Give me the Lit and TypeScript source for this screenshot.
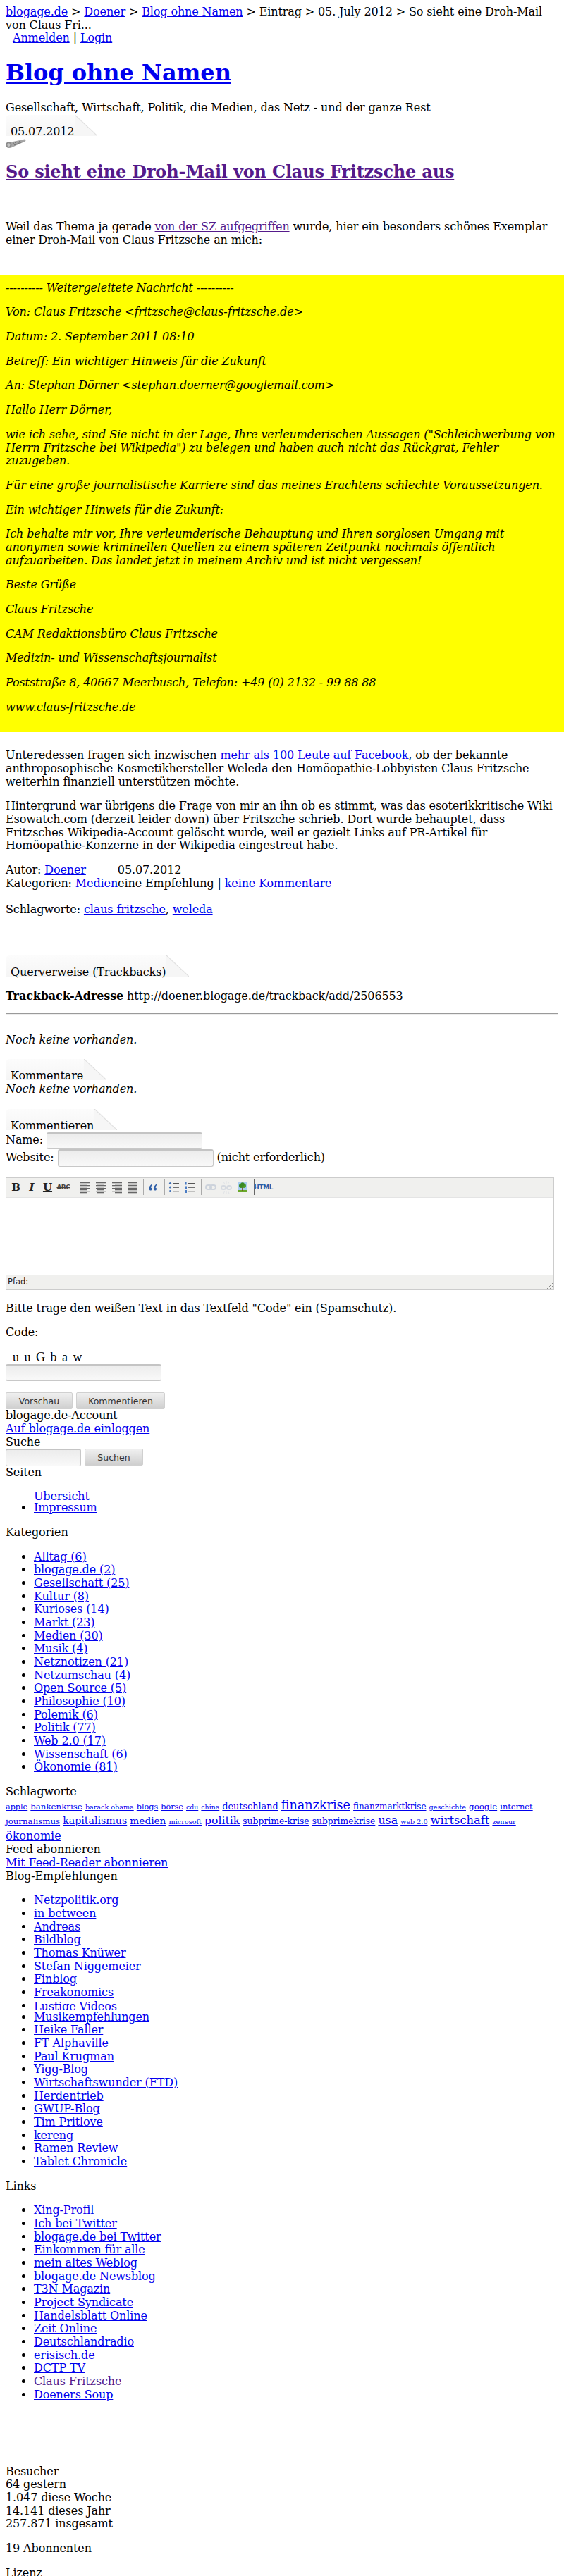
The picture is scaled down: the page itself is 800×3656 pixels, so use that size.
import { LitElement, html, css, svg } from "lit";
import { customElement } from "lit/decorators.js";

const kategorien = ["Alltag (6)","blogage.de (2)","Gesellschaft (25)","Kultur (8)","Kurioses (14)","Markt (23)","Medien (30)","Musik (4)","Netznotizen (21)","Netzumschau (4)","Open Source (5)","Philosophie (10)","Polemik (6)","Politik (77)","Web 2.0 (17)","Wissenschaft (6)","Ökonomie (81)"];
const blogs = ["Netzpolitik.org","in between","Andreas","Bildblog","Thomas Knüwer","Stefan Niggemeier","Finblog","Freakonomics","Lustige Videos","Musikempfehlungen","Heike Faller","FT Alphaville","Paul Krugman","Yigg-Blog","Wirtschaftswunder (FTD)","Herdentrieb","GWUP-Blog","Tim Pritlove","kereng","Ramen Review","Tablet Chronicle"];
const links = ["Xing-Profil","Ich bei Twitter","blogage.de bei Twitter","Einkommen für alle","mein altes Weblog","blogage.de Newsblog","T3N Magazin","Project Syndicate","Handelsblatt Online","Zeit Online","Deutschlandradio","erisisch.de","DCTP TV","Claus Fritzsche","Doeners Soup"];
const tags: [string, number][] = [["apple",11.2],["bankenkrise",11.8],["barack obama",9.6],["blogs",11.2],["börse",11.2],["cdu",9.4],["china",9.4],["deutschland",12.8],["finanzkrise",17.6],["finanzmarktkrise",12],["geschichte",9.6],["google",11.8],["internet",11.4],["journalismus",11.8],["kapitalismus",14.2],["medien",13.7],["microsoft",9.7],["politik",15.6],["subprime-krise",12.4],["subprimekrise",12.3],["usa",15.8],["web 2.0",9.6],["wirtschaft",16.3],["zensur",9.8],["ökonomie",16]];
const mail1 = ["---------- Weitergeleitete Nachricht ----------","Von: Claus Fritzsche <fritzsche@claus-fritzsche.de>","Datum: 2. September 2011 08:10","Betreff: Ein wichtiger Hinweis für die Zukunft","An: Stephan Dörner <stephan.doerner@googlemail.com>","Hallo Herr Dörner,","wie ich sehe, sind Sie nicht in der Lage, Ihre verleumderischen Aussagen (\"Schleichwerbung von Herrn Fritzsche bei Wikipedia\") zu belegen und haben auch nicht das Rückgrat, Fehler zuzugeben.","Für eine große journalistische Karriere sind das meines Erachtens schlechte Voraussetzungen.","Ein wichtiger Hinweis für die Zukunft:","Ich behalte mir vor, Ihre verleumderische Behauptung und Ihren sorglosen Umgang mit anonymen sowie kriminellen Quellen zu einem späteren Zeitpunkt nochmals öffentlich aufzuarbeiten. Das landet jetzt in meinem Archiv und ist nicht vergessen!","Beste Grüße","Claus Fritzsche","CAM Redaktionsbüro Claus Fritzsche","Medizin- und Wissenschaftsjournalist","Poststraße 8, 40667 Meerbusch, Telefon: +49 (0) 2132 - 99 88 88"];

const alignIcon = (pat: number[][]) => html`<svg class="ico" viewBox="0 0 20 20" width="20" height="20">
  ${pat.map(([x, w], i) => svg`<rect x=${x} y=${3 + i * 2} width=${w} height="1.3" fill="#666"/>`)}</svg>`;
const L = [[4,14],[4,10],[4,14],[4,10],[4,14],[4,10],[4,14],[4,10]];
const C = [[4,14],[6,10],[4,14],[6,10],[4,14],[6,10],[4,14],[6,10]];
const R = [[4,14],[8,10],[4,14],[8,10],[4,14],[8,10],[4,14],[8,10]];
const F = [[4,14],[4,14],[4,14],[4,14],[4,14],[4,14],[4,14],[4,14]];

@customElement("app-root")
export class AppRoot extends LitElement {
  static styles = css`
    :host { display: block; font: 16px/18.67px "DejaVu Serif", serif; letter-spacing: -0.12px; color: #000; background: #fff; padding: 8px 8px 0; height: 3656px; box-sizing: border-box; overflow: hidden; }
    a { color: #0000ee; text-decoration: underline; }
    a.seen { color: #551a8b; }
    h1 { font-size: 32px; line-height: 37.3px; margin: 21.4px 0; font-weight: bold; letter-spacing: -0.07px; }
    h2 { font-size: 24px; line-height: 28px; margin: 20px 0; font-weight: bold; letter-spacing: -0.19px; }
    p { margin: 16px 0; }
    .indent { padding-left: 10px; }
    .tab {
      display: block; width: fit-content; box-sizing: border-box; height: 34px; padding: 15.3px 33px 0 7px;
      background:
        linear-gradient(#dcdcdc, #e8e8e8) left top / 1px 30px no-repeat,
        linear-gradient(to top right, #f6f6f6 48%, #dedede 50%, #ffffff 53%) right top / 32px 30px no-repeat,
        linear-gradient(#fcfcfc, #f5f5f5) left top / calc(100% - 32px) 30px no-repeat;
      border-top-left-radius: 6px;
    }
    .bolt { display: block; width: 29px; height: 13px; }
    .lead { margin-top: 55.7px; }
    .mail { margin: 39px -8px 24px; padding: 10px 8px 26px; background: #ffff00; font-style: italic; }
    .mail p { margin: 0 0 16px; }
    .mail p:last-child { margin: 0; }
    .mail a { color: #000; }
    .date { margin-left: 45px; }
    .gap { margin-top: 18.67px; }
    .track-tab { margin-top: 55px; }
    .track { margin: 15.3px 0 14px; }
    hr { margin: 0 0 27px; border: 0; border-top: 1px solid #9a9a9a; border-bottom: 1px solid #eee; }
    .none { font-style: italic; }
    .t1 { margin-top: 17.6px; }
    .t2 { margin-top: 18.3px; height: 32.7px; }
    .row { display: flex; align-items: center; gap: 5px; height: 24.5px; }
    .field { box-sizing: border-box; height: 24.5px; border: 1px solid #c8c8c8; border-top: 2px solid #c4c4c4; border-radius: 3px; background: linear-gradient(#ececec, #f9f9f9); }
    .w221 { width: 221px; }
    .w107 { width: 107px; }
    .editor { box-sizing: border-box; width: 778px; height: 160px; margin-top: 15.3px; border: 1px solid #ccc; display: flex; flex-direction: column; letter-spacing: 0; }
    .toolbar { height: 28px; background: #f0f0ee; border-bottom: 1px solid #e4e4e4; display: flex; align-items: center; padding-left: 2.5px; box-sizing: border-box; }
    .btn { width: 22.4px; height: 20px; display: flex; align-items: center; justify-content: center; color: #222; font-size: 15px; flex: none; }
    .btn.b { font: bold 15px "DejaVu Serif", serif; }
    .btn.i { font: italic bold 15px "DejaVu Serif", serif; }
    .btn.u { font: bold 15px "DejaVu Serif", serif; text-decoration: underline; }
    .btn.s { font: bold 9px "DejaVu Sans", sans-serif; text-decoration: line-through; letter-spacing: -0.5px; color: #444; }
    .btn.h { font: bold 9px "DejaVu Sans", sans-serif; color: #2b5ea8; letter-spacing: -0.4px; }
    .sep { flex: none; width: 1px; height: 22px; background: #aaa; margin: 0 1.5px 0 5px; }
    .sep.dark { background: #666; }
    .ico { display: block; }
    .area { flex: 1; background: #fff; }
    .status { height: 21px; background: #f0f0ee; display: flex; align-items: center; justify-content: space-between; font: 11.5px/21px "DejaVu Sans", sans-serif; padding-left: 2px; color: #222; border-top: 1px solid #ececec; box-sizing: border-box; }
    .grip { align-self: flex-end; display: block; }
    .hint { margin: 17px 0 16px; }
    .captcha { margin-top: 16px; padding-left: 10px; font: 18px/18.67px "Liberation Serif", serif; letter-spacing: 1px; word-spacing: 1px; height: 18.67px; }
    .w221c { display: block; width: 221px; height: 24.5px; }
    .buttons { display: flex; gap: 5px; margin-top: 16px; }
    .button { box-sizing: border-box; height: 24px; display: flex; align-items: center; justify-content: center; border: 1px solid #d0d0d0; border-radius: 2px; background: linear-gradient(#f0f0f0, #cfcfcf); font: 12.5px "DejaVu Sans", sans-serif; letter-spacing: 0; color: #333; }
    .bv { width: 95px; } .bk { width: 126px; } .bs { width: 83px; }
    .search { display: flex; gap: 5px; height: 24.3px; }
    ul { margin: 16px 0; padding: 0 0 0 40px; }
    li.s16 { height: 16px; overflow: hidden; }
    li.cut { height: 16px; }
    li.cut > span { display: block; height: 12.3px; overflow: hidden; }
    .cloud { line-height: 19.5px; font-size: 12.8px; letter-spacing: 0; }
    .sb2 { margin-top: 90.3px; }
  `;

  private list(items: string[]) {
    return html`<ul>${items.map((t) => {
      if (t === "Lustige Videos") return html`<li class="cut"><span><a href="#">${t}</a></span></li>`;
      if (t === "Übersicht") return html`<li class="s16"><a href="#">${t}</a></li>`;
      return html`<li><a href="#" class=${t === "Claus Fritzsche" ? "seen" : ""}>${t}</a></li>`;
    })}</ul>`;
  }

  render() {
    return html`
      <div><a href="#">blogage.de</a> &gt; <a href="#">Doener</a> &gt; <a href="#">Blog ohne Namen</a> &gt; Eintrag &gt; 05. July 2012 &gt; So sieht eine Droh-Mail von Claus Fri...</div>
      <div class="indent"><a href="#">Anmelden</a> | <a href="#">Login</a></div>
      <h1><a href="#">Blog ohne Namen</a></h1>
      <div>Gesellschaft, Wirtschaft, Politik, die Medien, das Netz - und der ganze Rest</div>
      <div class="tab">05.07.2012</div>
      <svg class="bolt" viewBox="0 0 29 13">
        <path d="M1 6 L27 0.6 Q29.2 1.6 28 3.6 L8 12.6 Q2 13.4 0.6 10 Z" fill="#a6a6a6"/>
        <ellipse cx="4.4" cy="8.6" rx="4" ry="4.2" fill="#8c8c8c"/>
        <ellipse cx="4.4" cy="8.6" rx="2" ry="2.4" fill="#c4c4c4"/>
        <path d="M10 6.5 L20 3.5 M12 9 L24 4" stroke="#6e6e6e" stroke-width="1.1" stroke-dasharray="2 1.2"/>
      </svg>
      <h2><a href="#" class="seen">So sieht eine Droh-Mail von Claus Fritzsche aus</a></h2>
      <div class="lead">Weil das Thema ja gerade <a href="#" class="seen">von der SZ aufgegriffen</a> wurde, hier ein besonders schönes Exemplar einer Droh-Mail von Claus Fritzsche an mich:</div>
      <div class="mail">
        ${mail1.map((t) => html`<p>${t}</p>`)}
        <p><a href="#">www.claus-fritzsche.de</a></p>
      </div>
      <p>Unteredessen fragen sich inzwischen <a href="#">mehr als 100 Leute auf Facebook</a>, ob der bekannte anthroposophische Kosmetikhersteller Weleda den Homöopathie-Lobbyisten Claus Fritzsche weiterhin finanziell unterstützen möchte.</p>
      <p>Hintergrund war übrigens die Frage von mir an ihn ob es stimmt, was das esoterikkritische Wiki Esowatch.com (derzeit leider down) über Fritszche schrieb. Dort wurde behauptet, dass Fritzsches Wikipedia-Account gelöscht wurde, weil er gezielt Links auf PR-Artikel für Homöopathie-Konzerne in der Wikipedia eingestreut habe.</p>
      <div>Autor: <a href="#">Doener</a><span class="date">05.07.2012</span></div>
      <div>Kategorien: <a href="#">Medien</a>eine Empfehlung | <a href="#">keine Kommentare</a></div>
      <div class="gap">Schlagworte: <a href="#">claus fritzsche</a>, <a href="#">weleda</a></div>
      <div class="tab track-tab">Querverweise (Trackbacks)</div>
      <div class="track"><b>Trackback-Adresse</b> http://doener.blogage.de/trackback/add/2506553</div>
      <hr />
      <div class="none">Noch keine vorhanden.</div>
      <div class="tab t1">Kommentare</div>
      <div class="none">Noch keine vorhanden.</div>
      <div class="tab t2">Kommentieren</div>
      <div class="row">Name: <span class="field w221"></span></div>
      <div class="row">Website: <span class="field w221"></span> (nicht erforderlich)</div>
      <div class="editor">
        <div class="toolbar">
          <span class="btn b">B</span><span class="btn i">I</span><span class="btn u">U</span><span class="btn s">ABC</span>
          <span class="sep"></span>
          <span class="btn">${alignIcon(L)}</span><span class="btn">${alignIcon(C)}</span><span class="btn">${alignIcon(R)}</span><span class="btn">${alignIcon(F)}</span>
          <span class="sep"></span>
          <span class="btn"><svg class="ico" viewBox="0 0 20 20" width="20" height="20"><path d="M9 5 Q4 8 4.5 13 Q6 15.5 8 14 Q9.5 11.5 7 10.5 Q7.5 8 9 6.5Z M15.5 5 Q10.5 8 11 13 Q12.5 15.5 14.5 14 Q16 11.5 13.5 10.5 Q14 8 15.5 6.5Z" fill="#2f5fa8"/></svg></span>
          <span class="sep"></span>
          <span class="btn"><svg class="ico" viewBox="0 0 20 20" width="20" height="20"><g fill="#3f6fb5"><circle cx="4.5" cy="4.5" r="1.6"/><circle cx="4.5" cy="10" r="1.6"/><circle cx="4.5" cy="15.5" r="1.6"/></g><g fill="#555"><rect x="8" y="4" width="9" height="1.3"/><rect x="8" y="9.5" width="9" height="1.3"/><rect x="8" y="15" width="9" height="1.3"/></g></svg></span>
          <span class="btn"><svg class="ico" viewBox="0 0 20 20" width="20" height="20"><g fill="#4a7cc4"><rect x="4" y="2.5" width="1.6" height="4"/><rect x="3" y="8.5" width="3" height="4"/><rect x="3" y="14" width="3" height="4"/></g><g fill="#555"><rect x="8" y="4" width="9" height="1.3"/><rect x="8" y="9.5" width="9" height="1.3"/><rect x="8" y="15" width="9" height="1.3"/></g></svg></span>
          <span class="sep"></span>
          <span class="btn"><svg class="ico" viewBox="0 0 20 20" width="20" height="20"><g fill="none" stroke="#cdd3dc" stroke-width="2"><rect x="3" y="7" width="8" height="6" rx="3"/><rect x="9" y="7" width="8" height="6" rx="3"/></g></svg></span>
          <span class="btn"><svg class="ico" viewBox="0 0 20 20" width="20" height="20"><g fill="none" stroke="#d6dae0" stroke-width="2"><rect x="3" y="8" width="6" height="5" rx="2.5"/><rect x="11" y="8" width="6" height="5" rx="2.5"/></g><path d="M10 1V6 M10 15V20 M6 2L8 6 M14 2L12 6 M6 19L8 15 M14 19L12 15" stroke="#dfe2e6"/></svg></span>
          <span class="btn"><svg class="ico" viewBox="0 0 20 20" width="20" height="20"><rect x="3" y="3" width="14" height="14" fill="#a9cdf0"/><rect x="3" y="14" width="14" height="3" fill="#6aa82a"/><path d="M9.2 10h1.6v5H9.2z" fill="#7a4a16"/><circle cx="8" cy="8" r="3" fill="#3b8a22"/><circle cx="12" cy="8" r="3" fill="#4f9f2c"/><circle cx="10" cy="6" r="2.8" fill="#3b8a22"/></svg></span>
          <span class="sep dark"></span>
          <span class="btn h">HTML</span>
        </div>
        <div class="area"></div>
        <div class="status"><span>Pfad:</span>
          <svg class="grip" width="11" height="11" viewBox="0 0 11 11"><path d="M1 11 L11 1 M5 11 L11 5 M9 11 L11 9" stroke="#8a8a8a" fill="none"/></svg>
        </div>
      </div>
      <p class="hint">Bitte trage den weißen Text in das Textfeld "Code" ein (Spamschutz).</p>
      <div>Code:</div>
      <div class="captcha">u u G b a w</div>
      <span class="field w221c"></span>
      <div class="buttons"><span class="button bv">Vorschau</span><span class="button bk">Kommentieren</span></div>
      <div>blogage.de-Account</div>
      <div><a href="#">Auf blogage.de einloggen</a></div>
      <div>Suche</div>
      <div class="search"><span class="field w107"></span><span class="button bs">Suchen</span></div>
      <div>Seiten</div>
      ${this.list(["Übersicht", "Impressum"])}
      <div>Kategorien</div>
      ${this.list(kategorien)}
      <div>Schlagworte</div>
      <div class="cloud">${tags.map(([t, s]) => html`<a href="#" style="font-size:${s}px">${t}</a> `)}</div>
      <div>Feed abonnieren</div>
      <div><a href="#">Mit Feed-Reader abonnieren</a></div>
      <div>Blog-Empfehlungen</div>
      ${this.list(blogs)}
      <div>Links</div>
      ${this.list(links)}
      <div class="sb2">Besucher</div>
      <div>64 gestern</div>
      <div>1.047 diese Woche</div>
      <div>14.141 dieses Jahr</div>
      <div>257.871 insgesamt</div>
      <p>19 Abonnenten</p>
      <p>Lizenz</p>
    `;
  }
}
